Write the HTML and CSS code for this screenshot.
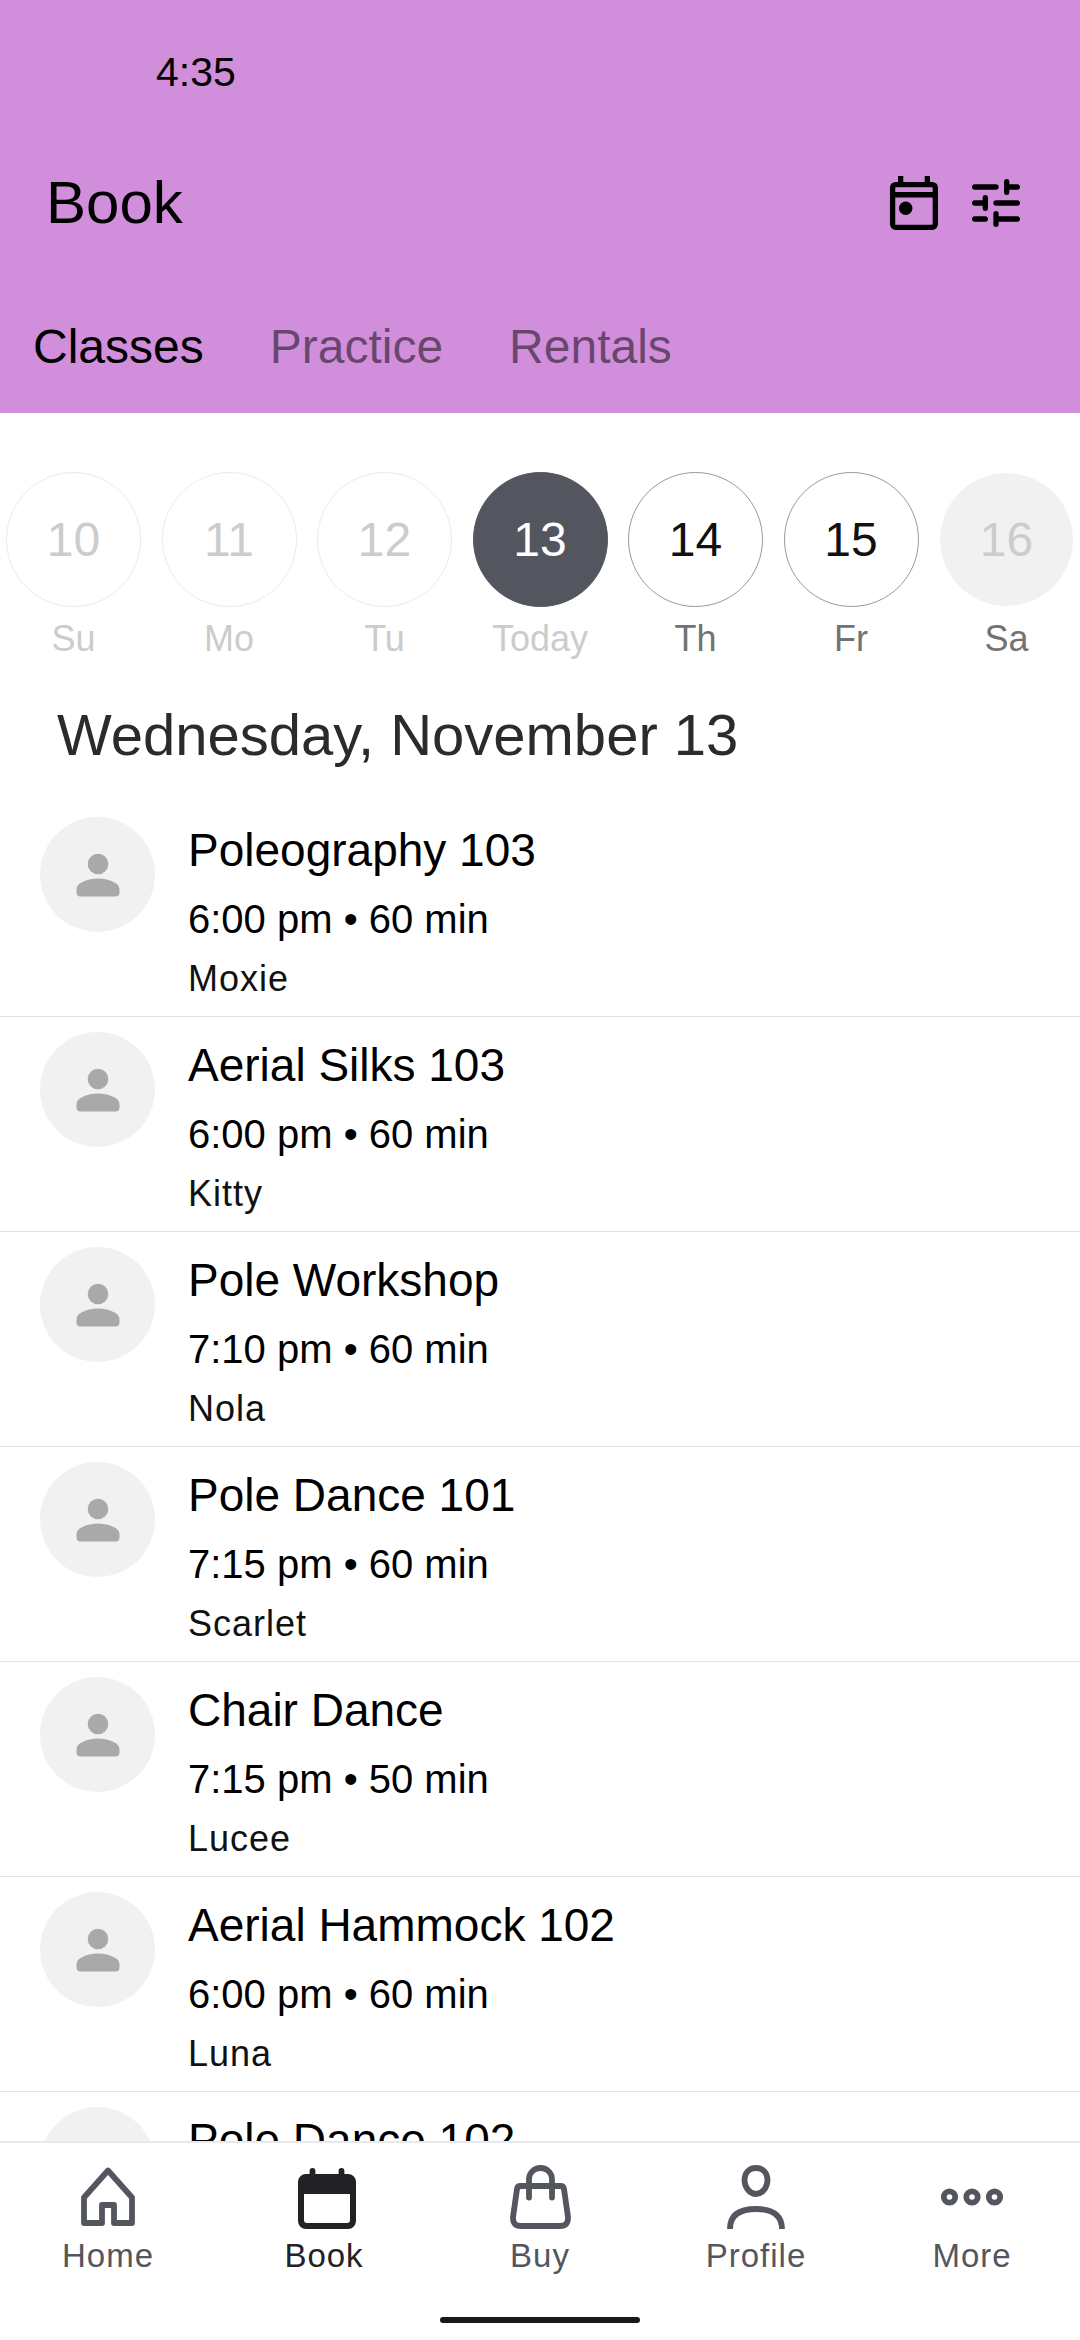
FILE: index.html
```html
<!DOCTYPE html>
<html lang="en">
<head>
    <meta charset="UTF-8">
    <meta name="viewport" content="width=device-width, initial-scale=1.0">
    <title>Book</title>
    <link rel="stylesheet" href="styles.css">
</head>
<body>
    <!-- Shared avatar placeholder -->
    <svg class="symbols" width="0" height="0" aria-hidden="true">
        <symbol id="person" viewBox="0 0 64 64">
            <circle cx="32" cy="21" r="10.3"/>
            <path d="M10.5 47c0-4 2-6 5-7.500C20 37 26 35.500 32 35.500s12 1.500 16.500 4c3 1.500 5 3.500 5 7.500v2.500c0 2.500-1.500 4-4 4h-35c-2.500 0-4-1.500-4-4z"/>
        </symbol>
    </svg>

    <header class="header">
        <div class="status-bar">4:35</div>

        <div class="title-bar">
            <h1 class="title">Book</h1>
            <div class="actions">
                <button class="icon-button" type="button" aria-label="Pick a date">
                    <svg viewBox="0 0 64 64">
                        <rect x="10.600" y="13.600" width="42.700" height="42.700" rx="3" fill="none" stroke="currentColor" stroke-width="5.300"/>
                        <path d="M10 21h44v5.600H10zM16 5h5.300v8H16zM42.700 5H48v8h-5.300z" fill="currentColor"/>
                        <circle cx="23.700" cy="37.300" r="6.700" fill="currentColor"/>
                    </svg>
                </button>
                <button class="icon-button" type="button" aria-label="Filter">
                    <svg viewBox="0 0 64 64" fill="none" stroke="currentColor" stroke-width="5.300" stroke-linecap="round">
                        <path d="M10.700 16H32M42.700 10.700v10.600M42.700 16h10.600M10.700 32h10.600M21.300 26.700v10.600M32 32h21.300M10.700 48h10.600M32 42.700v10.600M32 48h21.300"/>
                    </svg>
                </button>
            </div>
        </div>

        <div class="tabs" role="tablist">
            <button class="tab active" type="button" role="tab" aria-selected="true">Classes</button>
            <button class="tab" type="button" role="tab" aria-selected="false">Practice</button>
            <button class="tab" type="button" role="tab" aria-selected="false">Rentals</button>
        </div>
    </header>

    <main class="content">
        <div class="days">
            <button class="day past" type="button" disabled>
                <span class="day-number">10</span>
                <span class="day-name">Su</span>
            </button>
            <button class="day past" type="button" disabled>
                <span class="day-number">11</span>
                <span class="day-name">Mo</span>
            </button>
            <button class="day past" type="button" disabled>
                <span class="day-number">12</span>
                <span class="day-name">Tu</span>
            </button>
            <button class="day today" type="button">
                <span class="day-number">13</span>
                <span class="day-name">Today</span>
            </button>
            <button class="day" type="button">
                <span class="day-number">14</span>
                <span class="day-name">Th</span>
            </button>
            <button class="day" type="button">
                <span class="day-number">15</span>
                <span class="day-name">Fr</span>
            </button>
            <button class="day empty" type="button">
                <span class="day-number">16</span>
                <span class="day-name">Sa</span>
            </button>
        </div>

        <h2 class="date-heading">Wednesday, November 13</h2>

        <ul class="class-list">
            <li class="class-item">
                <div class="avatar"><svg><use href="#person"/></svg></div>
                <div class="class-info">
                    <h3 class="class-title">Poleography 103</h3>
                    <p class="class-time">6:00 pm • 60 min</p>
                    <p class="class-teacher">Moxie</p>
                </div>
            </li>
            <li class="class-item">
                <div class="avatar"><svg><use href="#person"/></svg></div>
                <div class="class-info">
                    <h3 class="class-title">Aerial Silks 103</h3>
                    <p class="class-time">6:00 pm • 60 min</p>
                    <p class="class-teacher">Kitty</p>
                </div>
            </li>
            <li class="class-item">
                <div class="avatar"><svg><use href="#person"/></svg></div>
                <div class="class-info">
                    <h3 class="class-title">Pole Workshop</h3>
                    <p class="class-time">7:10 pm • 60 min</p>
                    <p class="class-teacher">Nola</p>
                </div>
            </li>
            <li class="class-item">
                <div class="avatar"><svg><use href="#person"/></svg></div>
                <div class="class-info">
                    <h3 class="class-title">Pole Dance 101</h3>
                    <p class="class-time">7:15 pm • 60 min</p>
                    <p class="class-teacher">Scarlet</p>
                </div>
            </li>
            <li class="class-item">
                <div class="avatar"><svg><use href="#person"/></svg></div>
                <div class="class-info">
                    <h3 class="class-title">Chair Dance</h3>
                    <p class="class-time">7:15 pm • 50 min</p>
                    <p class="class-teacher">Lucee</p>
                </div>
            </li>
            <li class="class-item">
                <div class="avatar"><svg><use href="#person"/></svg></div>
                <div class="class-info">
                    <h3 class="class-title">Aerial Hammock 102</h3>
                    <p class="class-time">6:00 pm • 60 min</p>
                    <p class="class-teacher">Luna</p>
                </div>
            </li>
            <li class="class-item">
                <div class="avatar"><svg><use href="#person"/></svg></div>
                <div class="class-info">
                    <h3 class="class-title">Pole Dance 102</h3>
                </div>
            </li>
        </ul>
    </main>

    <footer class="bottom-bar">
        <nav class="nav">
            <a class="nav-item" href="#home">
                <svg viewBox="0 0 72 72" fill="none" stroke="currentColor" stroke-width="5.800" stroke-linejoin="round">
                    <path d="M12 36.500 36 9.500l24 27V62H42V44H30v18H12z"/>
                </svg>
                Home
            </a>
            <a class="nav-item active" href="#book">
                <svg viewBox="0 0 72 72" fill="currentColor">
                    <path fill-rule="evenodd" d="M18 13h42a8 8 0 0 1 8 8v39a8 8 0 0 1-8 8H18a8 8 0 0 1-8-8V21a8 8 0 0 1 8-8zM16 33v26a3 3 0 0 0 3 3h40a3 3 0 0 0 3-3V33z"/>
                    <path d="M24.500 10v6M53.500 10v6" fill="none" stroke="currentColor" stroke-width="5.800" stroke-linecap="round"/>
                </svg>
                Book
            </a>
            <a class="nav-item" href="#buy">
                <svg viewBox="0 0 72 72" fill="none" stroke="currentColor" stroke-width="5.800" stroke-linecap="round">
                    <path d="M16.500 25h40q3 0 3.500 3l4 28q.5 9-8 9H17q-8.500 0-8-9l4-28q.5-3 3.500-3z"/>
                    <path d="M25 36.500V18a11.500 11 0 0 1 23 0v18.500"/>
                </svg>
                Buy
            </a>
            <a class="nav-item" href="#profile">
                <svg viewBox="0 0 72 72" fill="none" stroke="currentColor" stroke-width="5.800">
                    <path d="M36 7c7 0 11.500 5 11.500 12S42.500 33 36 33 24.500 26 24.500 19 29 7 36 7z"/>
                    <path d="M10 68c0-13 8-20 26-20s26 7 26 20"/>
                </svg>
                Profile
            </a>
            <a class="nav-item" href="#more">
                <svg viewBox="0 0 72 72" fill="none" stroke="currentColor" stroke-width="5.800">
                    <circle cx="13.500" cy="36" r="5.700"/>
                    <circle cx="36" cy="36" r="5.700"/>
                    <circle cx="58.500" cy="36" r="5.700"/>
                </svg>
                More
            </a>
        </nav>
        <div class="home-indicator"></div>
    </footer>
</body>
</html>
```

FILE: styles.css
```css
* {
    margin: 0;
    padding: 0;
    box-sizing: border-box;
}

body {
    height: 100vh;
    display: flex;
    flex-direction: column;
    background-color: #fff;
    color: #000;
    font-family: "Liberation Sans", Arial, sans-serif;
    overflow: hidden;
}

button {
    border: none;
    background: none;
    color: inherit;
    font-family: inherit;
    cursor: pointer;
}

h1, h2, h3 {
    font-weight: normal;
}

.symbols {
    position: absolute;
}

/* Header */
.header {
    flex-shrink: 0;
    background-color: #d08edb;
}

.status-bar {
    padding-left: 156px;
    font-size: 41px;
    line-height: 144px;
}

.title-bar {
    display: flex;
    justify-content: space-between;
    align-items: center;
    padding: 0 52px 18px 46px;
}

.title {
    font-size: 60px;
    line-height: 118px;
}

.actions {
    display: flex;
    gap: 18px;
}

.icon-button,
.icon-button svg {
    display: block;
    width: 64px;
    height: 64px;
}

.tabs {
    display: flex;
    gap: 66px;
    padding: 0 33px;
}

.tab {
    font-size: 48px;
    line-height: 133px;
    color: rgba(0, 0, 0, 0.5);
}

.tab.active {
    color: #000;
}

/* Day picker */
.content {
    flex: 1;
    min-height: 0;
    overflow: hidden;
}

.days {
    display: flex;
    justify-content: space-between;
    padding: 59px 6px 0;
}

.day {
    width: 135px;
    color: #111;
}

.day-number {
    display: flex;
    align-items: center;
    justify-content: center;
    height: 135px;
    border: 1px solid #999;
    border-radius: 50%;
    font-size: 48px;
}

.day-name {
    display: block;
    font-size: 36px;
    line-height: 64px;
    color: #737373;
}

.day.past .day-number {
    border-color: #ebebeb;
    color: #ccc;
}

.day.past .day-name,
.day.today .day-name {
    color: #ccc;
}

.day.today .day-number {
    border-color: #54565f;
    background-color: #54565f;
    color: #fff;
}

.day.empty .day-number {
    border-color: #fff;
    background-color: #f1f1f1;
    background-clip: padding-box;
    color: #ccc;
}

.date-heading {
    padding: 0 57px 4px;
    font-size: 58px;
    line-height: 127px;
    color: #2b2b2b;
}

/* Class list */
.class-list {
    list-style: none;
}

.class-item {
    display: flex;
    gap: 33px;
    padding: 15px 40px 13px;
    border-bottom: 1px solid #e2e2e2;
}

.avatar {
    display: flex;
    align-items: center;
    justify-content: center;
    flex-shrink: 0;
    width: 115px;
    height: 115px;
    border-radius: 50%;
    background-color: #f1f1f1;
}

.avatar svg {
    width: 64px;
    height: 64px;
    fill: #a9a9a9;
}

.class-title {
    font-size: 46px;
    line-height: 66px;
}

.class-time {
    font-size: 40px;
    line-height: 72px;
}

.class-teacher {
    font-size: 36px;
    line-height: 48px;
    letter-spacing: 1px;
    color: #111;
}

/* Bottom navigation */
.bottom-bar {
    flex-shrink: 0;
    padding: 18px 0 17px;
    border-top: 2px solid #e8e8ed;
    background-color: #fff;
}

.nav {
    display: grid;
    grid-template-columns: repeat(5, 1fr);
}

.nav-item {
    display: flex;
    flex-direction: column;
    align-items: center;
    font-size: 33px;
    line-height: 46px;
    letter-spacing: 1px;
    color: #54565f;
    text-decoration: none;
}

.nav-item svg {
    width: 72px;
    height: 72px;
}

.nav-item.active {
    color: #222226;
}

.home-indicator {
    width: 200px;
    height: 6px;
    margin: 38px auto 0;
    border-radius: 3px;
    background-color: #1a1a1a;
}
```
